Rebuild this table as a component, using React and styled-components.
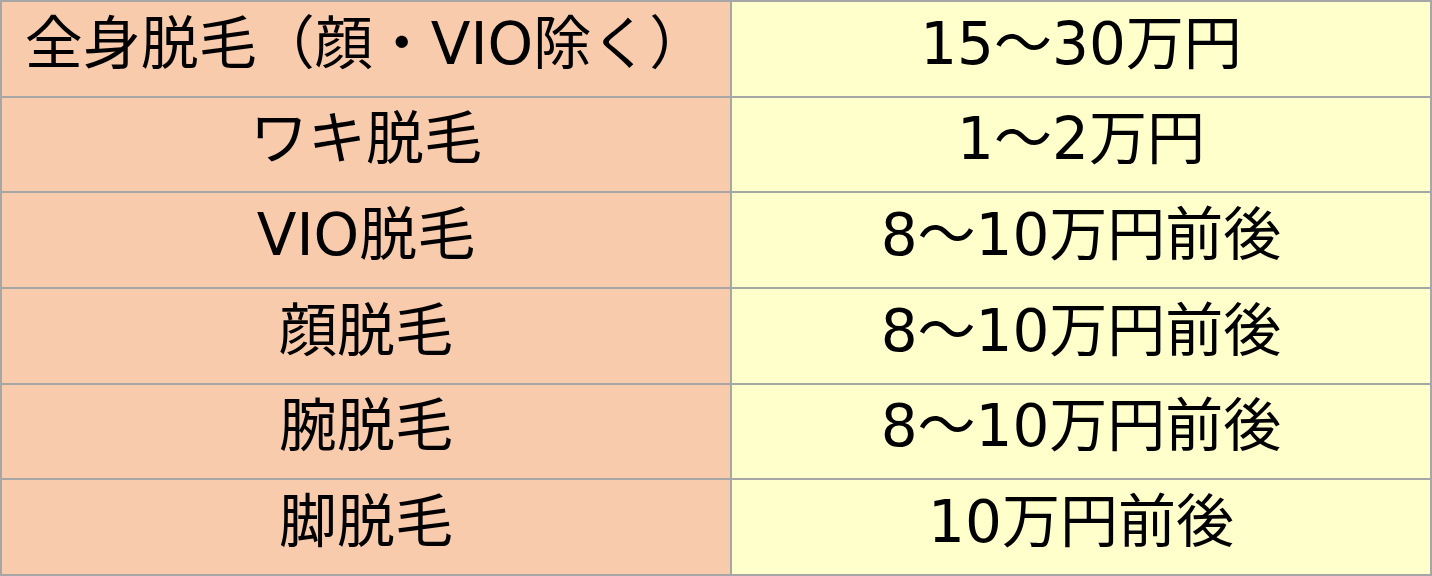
import React from "react";
import styled, { createGlobalStyle } from "styled-components";

const GlobalStyle = createGlobalStyle`
  html, body {
    margin: 0;
    padding: 0;
    background: #ffffff;
  }
  body {
    font-family: "DejaVu Sans", "Noto Sans CJK JP", sans-serif;
  }
`;

const PriceTable = styled.div`
  display: grid;
  grid-template-columns: 728px 1fr;
  grid-auto-rows: 1fr;
  gap: 2px;
  padding: 2px;
  width: 1432px;
  height: 576px;
  box-sizing: border-box;
  background: #a6a6a6;
`;

const Cell = styled.div`
  display: flex;
  align-items: center;
  justify-content: center;
  padding-bottom: 10px;
  box-sizing: border-box;
  background: ${(p) => (p.$label ? "#f8cbad" : "#ffffcc")};
  color: #000;
  font-size: 58px;
  line-height: 1;
  white-space: nowrap;
`;

const rows = [
  { part: "全身脱毛（顔・VIO除く）", price: "15〜30万円" },
  { part: "ワキ脱毛", price: "1〜2万円" },
  { part: "VIO脱毛", price: "8〜10万円前後" },
  { part: "顔脱毛", price: "8〜10万円前後" },
  { part: "腕脱毛", price: "8〜10万円前後" },
  { part: "脚脱毛", price: "10万円前後" },
];

const App = () => {
  return (
    <>
      <GlobalStyle />
      <PriceTable>
        {rows.map((row) => (
          <React.Fragment key={row.part}>
            <Cell $label>{row.part}</Cell>
            <Cell>{row.price}</Cell>
          </React.Fragment>
        ))}
      </PriceTable>
    </>
  );
};

export default App;
